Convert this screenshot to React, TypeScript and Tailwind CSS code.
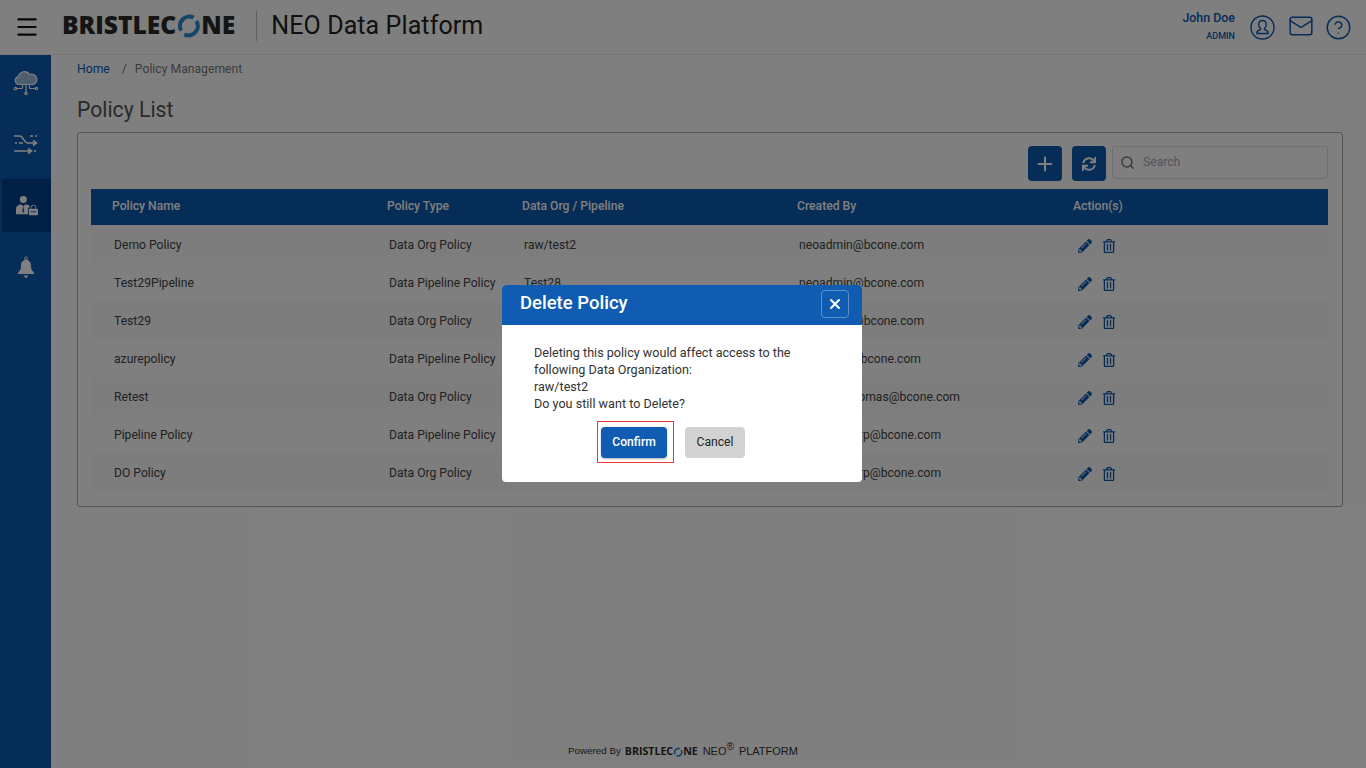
import React from "react";
import { Menu, Plus, Search, X, Mail, CircleHelp } from "lucide-react";
import { FaSync, FaPencilAlt, FaRegTrashAlt } from "react-icons/fa";

const rows = [
  ["Demo Policy", "Data Org Policy", "raw/test2", "neoadmin@bcone.com"],
  ["Test29Pipeline", "Data Pipeline Policy", "Test28", "neoadmin@bcone.com"],
  ["Test29", "Data Org Policy", "raw/test29", "neoadmin@bcone.com"],
  ["azurepolicy", "Data Pipeline Policy", "azure", "neo.test1@bcone.com"],
  ["Retest", "Data Org Policy", "raw/retest", "michelle.thomas@bcone.com"],
  ["Pipeline Policy", "Data Pipeline Policy", "Pipeline", "neousers.grp@bcone.com"],
  ["DO Policy", "Data Org Policy", "raw/do", "neousers.grp@bcone.com"],
];

function Logo({ small }: { small?: boolean }) {
  const ring = small ? 10 : 25;
  return (
    <span
      className={
        small
          ? "flex items-center font-['Open_Sans',sans-serif] font-bold text-[10.600px] leading-none text-[#2b2b2b]"
          : "flex items-center font-['Open_Sans',sans-serif] font-extrabold text-[24.600px] leading-none text-[#2b2b2b]"
      }
    >
      BRISTLEC
      <svg width={ring} height={ring} viewBox="0 0 24 24" className="shrink-0">
        <path d="M5 17A9 9 0 0 1 17 4.5" fill="none" stroke="#2f8fd0" strokeWidth="4" />
        <path d="M19.500 7.500A9 9 0 0 1 8 20.500" fill="none" stroke="#2f8fd0" strokeWidth="4" />
      </svg>
      NE
    </span>
  );
}

function CloudIcon() {
  return (
    <svg width="26" height="26" viewBox="0 0 26 26" fill="none" stroke="#fff" strokeWidth="1.200">
      <path d="M6 14.500a4 4 0 0 1-.5-7.900A6 6 0 0 1 16.500 4.500a4.500 4.500 0 0 1 4 9.900z" fill="#fff" fillOpacity=".6" />
      <path d="M13 14.500V22M9.500 14.500V17.500a1 1 0 0 1-1 1H3M16.500 14.500V17.500a1 1 0 0 0 1 1H23" />
      <circle cx="2.500" cy="18.500" r="1.200" /><circle cx="23.500" cy="18.500" r="1.200" /><circle cx="13" cy="23.500" r="1.200" />
    </svg>
  );
}

function FlowIcon() {
  return (
    <svg width="24" height="22" viewBox="0 0 24 22" fill="none" stroke="#fff" strokeWidth="1.600">
      <path d="M0 3h6c3 0 4 7 8 7h8M19 7.500 22.500 10 19 12.500" />
      <path d="M16 3h3M21 3h2M1 10h2M5 10h4M0 18h17M14 15.500l3.500 2.500-3.500 2.500M20 18h2" />
    </svg>
  );
}

function UserLockIcon() {
  return (
    <svg width="24" height="22" viewBox="0 0 26 24" fill="#fff">
      <circle cx="9" cy="5" r="3.800" />
      <path d="M1 21v-6c0-3 3-4.500 5-5l3 2 3 -2c2 .5 3.500 1.200 4 2.500a5 5 0 0 0-2 3.500V21z" />
      <path d="M9 11.500 8 18l1 1.500 1-1.500z" fill="#0b5ab0" />
      <rect x="15" y="15" width="10" height="7" rx="1" />
      <path d="M17.500 15v-1.500a2.500 2.500 0 0 1 5 0V15" fill="none" stroke="#fff" strokeWidth="1" />
      <rect x="17" y="17.800" width="6" height="1" fill="#0b5ab0" />
    </svg>
  );
}

function BellIcon() {
  return (
    <svg width="20" height="26" viewBox="0 0 20 24" fill="#fff">
      <circle cx="10" cy="2.500" r="1.500" fill="none" stroke="#fff" />
      <path d="M10 4c3.500 0 5 2.500 5 6 0 3.500 1 5 3 6.500v1.500H2v-1.500c2-1.500 3-3 3-6.500 0-3.500 1.500-6 5-6z" />
      <path d="M7.500 19.500h5L10 22.500z" />
    </svg>
  );
}

function ProfileIcon() {
  return (
    <svg width="25" height="25" viewBox="0 0 25 25" fill="none" stroke="#0b5ab0" strokeWidth="1.400">
      <circle cx="12.500" cy="12.500" r="11.500" />
      <path d="M12.500 5.500c-2.500 0-3.800 1.800-3.800 4 0 1.800.8 3 1.800 3.800v1.200c-1.500.6-3.500 1-3.500 3v1h11v-1c0-2-2-2.400-3.500-3v-1.200c1-.8 1.800-2 1.800-3.800 0-2.200-1.300-4-3.800-4z" />
    </svg>
  );
}

export default function App() {
  return (
    <div className="relative flex flex-col h-[768px] w-[1366px] overflow-hidden bg-white font-['Roboto',sans-serif] text-[#333]">
      <header className="flex h-[55px] shrink-0 items-center border-b border-[#e8e8e8] bg-white">
        <Menu className="ml-[14px] mt-[-1px] text-[#111]" size={26} strokeWidth={2} />
        <div className="ml-[22px] mb-[3px]"><Logo /></div>
        <div className="ml-[21px] mb-[3px] h-[30px] w-px bg-[#c0c0c0]" />
        <h1 className="ml-[14px] mb-[4px] text-[25px] font-normal leading-none tracking-[0.1px] text-[#222]">NEO Data Platform</h1>
        <div className="ml-auto mt-[-1px] flex flex-col items-end">
          <span className="text-[12.400px] font-medium leading-[14px] text-[#0b5ab0]">John Doe</span>
          <span className="mt-[6px] text-[9px] font-medium leading-[11px] text-[#0b5ab0]">ADMIN</span>
        </div>
        <div className="ml-[15px] flex items-center">
          <ProfileIcon />
          <Mail className="ml-[13px] mb-[3px] text-[#0b5ab0]" size={26} strokeWidth={1.400} />
          <CircleHelp className="ml-[11px] mr-[14px] text-[#0b5ab0]" size={27} strokeWidth={1.300} />
        </div>
      </header>

      <div className="flex min-h-0 flex-1">
        <aside className="flex w-[51px] shrink-0 flex-col bg-[#0b5ab0]">
          <div className="flex h-[62px] items-center justify-center pb-[6px] pl-[1px]"><CloudIcon /></div>
          <div className="flex h-[62px] items-center justify-center pb-[9px]"><FlowIcon /></div>
          <div className="ml-[2px] flex h-[53px] items-center justify-center bg-[#03408a]"><UserLockIcon /></div>
          <div className="flex h-[70px] items-center justify-center pt-[2px]"><BellIcon /></div>
        </aside>

        <main className="flex min-w-0 flex-1 flex-col">
          <nav className="ml-[26px] mt-[7px] flex text-[12.200px] leading-[14px]">
            <span className="text-[#0b5ab0]">Home</span>
            <span className="ml-[12px] mr-[8px] text-[#777]">/</span>
            <span className="text-[#777]">Policy Management</span>
          </nav>
          <h2 className="ml-[26px] mt-[21px] text-[21.200px] font-normal leading-[26px] text-[#555]">Policy List</h2>
          <section className="ml-[26px] mr-[23px] mt-[9px] h-[375px] rounded-[3px] border border-[#aaa] pl-[13px] pr-[14px] pt-[13px]">
            <div className="flex h-[35px] items-start justify-end">
              <button className="flex h-[35px] w-[34px] items-center justify-center rounded-[4px] bg-[#0b5ab0] text-white"><Plus size={22} strokeWidth={2.200} /></button>
              <button className="ml-[10px] flex h-[35px] w-[34px] items-center justify-center rounded-[4px] bg-[#0b5ab0] text-white"><FaSync size={14} /></button>
              <div className="ml-[6px] flex h-[33px] w-[216px] items-center rounded-[3px] border border-[#ddd] bg-white pl-[7px]">
                <Search size={15} strokeWidth={2.400} className="text-[#777]" />
                <span className="ml-[8px] text-[12.150px] text-[#aaa]">Search</span>
              </div>
            </div>
            <div className="mt-[8px] grid h-[36px] grid-cols-[275px_135px_275px_276px_1fr] items-center bg-[#0b5ab0] pb-[1px] pl-[21px] text-[12.150px] font-medium text-white">
              <span>Policy Name</span><span>Policy Type</span><span>Data Org / Pipeline</span><span>Created By</span><span>Action(s)</span>
            </div>
            {rows.map((r, i) => (
              <div key={r[0]} className={(i % 2 === 0 ? "bg-[#fafafa] " : "bg-white ") + "grid h-[38px] grid-cols-[275px_135px_275px_276px_1fr] items-center pl-[23px] pt-[2px] text-[12.150px] text-[#444]"}>
                <span>{r[0]}</span><span>{r[1]}</span><span>{r[2]}</span><span>{r[3]}</span>
                <span className="flex items-center pl-[3px] pt-[1px]">
                  <FaPencilAlt size={14} className="text-[#0b5ab0]" />
                  <FaRegTrashAlt size={14} className="ml-[10px] text-[#0b5ab0]" />
                </span>
              </div>
            ))}
          </section>
          <footer className="mt-auto flex h-[34px] items-center justify-center pr-[51px] font-['Liberation_Sans',sans-serif] text-[#333]">
            <span className="text-[9.800px]">Powered By</span>
            <span className="ml-[4px] mt-[1px]"><Logo small /></span>
            <span className="ml-[5px] text-[11px]">NEO<sup className="text-[10px]">®</sup></span>
            <span className="ml-[5px] text-[11px]">PLATFORM</span>
          </footer>
        </main>
      </div>

      <div className="absolute inset-0 flex items-start justify-center bg-black/50 pr-[2px] pt-[285px]">
        <div className="w-[360px] overflow-hidden rounded-[4px] bg-white">
          <div className="flex h-[40px] items-center justify-between bg-[#0f5cb2] pl-[18px] pr-[13px] text-white">
            <span className="pb-[2px] text-[18.500px] font-medium">Delete Policy</span>
            <span className="mb-[2px] flex h-[28px] w-[28px] items-center justify-center rounded-[4px] border border-[#5d90cc]"><X size={16} strokeWidth={3} /></span>
          </div>
          <div className="px-[32px] pt-[19px] pb-[19px]">
            <p className="text-[12.600px] leading-[17px] text-[#333]">
              Deleting this policy would affect access to the<br />following Data Organization:<br />raw/test2<br />Do you still want to Delete?
            </p>
            <div className="mt-[9px] ml-[63px] flex items-center">
              <div className="flex h-[42px] w-[77px] items-center border border-[#e53935] pl-[3px]">
                <button className="h-[31px] w-[66px] rounded-[4px] bg-[#0f5cb2] text-[12.150px] font-medium text-white shadow-[0_1px_2px_rgba(0,0,0,0.3)]">Confirm</button>
              </div>
              <button className="ml-[11px] h-[31px] w-[60px] rounded-[4px] bg-[#d2d2d2] text-[12.150px] text-[#222]">Cancel</button>
            </div>
          </div>
        </div>
      </div>
    </div>
  );
}
